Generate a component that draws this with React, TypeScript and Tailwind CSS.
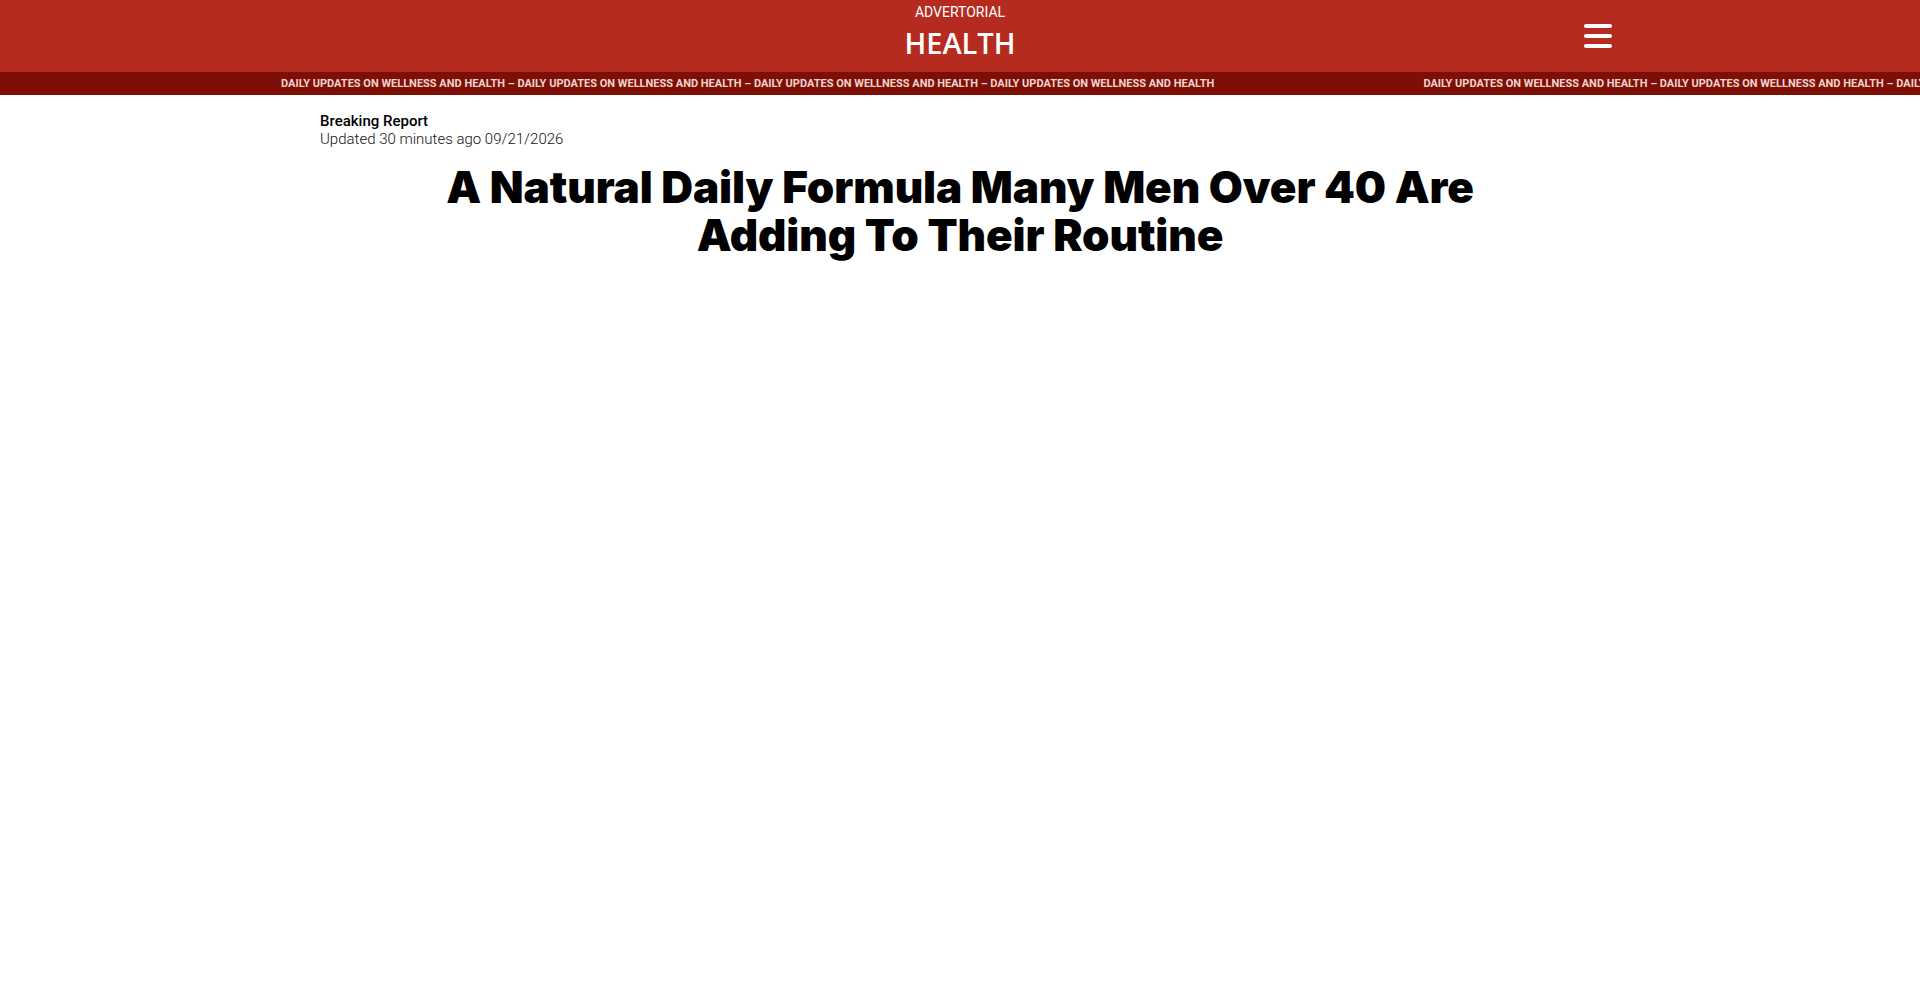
import React from "react";

const TICKER =
  "DAILY UPDATES ON WELLNESS AND HEALTH – DAILY UPDATES ON WELLNESS AND HEALTH – DAILY UPDATES ON WELLNESS AND HEALTH – DAILY UPDATES ON WELLNESS AND HEALTH";

export default function App() {
  return (
    <div className="min-h-[993px] bg-white" style={{ fontFamily: "Roboto, 'Liberation Sans', sans-serif" }}>
      <header className="bg-[#b52b20] h-[72px] relative">
        <div className="flex flex-col items-center pt-[3px]">
          <div className="text-[14px] leading-[18px] text-white uppercase">ADVERTORIAL</div>
          <div className="mt-[4px] text-[29px] leading-[36px] text-white font-semibold font-['Open_Sans',sans-serif]">HEALTH</div>
        </div>
        <button className="absolute left-[1584px] top-[24px] w-[28px] flex flex-col gap-[6px]" aria-label="menu">
          <span className="block h-[4px] w-[28px] rounded-full bg-white" />
          <span className="block h-[4px] w-[28px] rounded-full bg-white" />
          <span className="block h-[4px] w-[28px] rounded-full bg-white" />
        </button>
      </header>
      <div className="bg-[#7d0f06] h-[23px] pt-[1px] overflow-hidden flex items-center whitespace-nowrap pl-[281px] gap-[209px] text-[11px] font-bold text-[#f2d4cf]">
        <span className="shrink-0">{TICKER}</span>
        <span className="shrink-0">{TICKER}</span>
      </div>
      <main className="max-w-[1280px] mx-auto pt-[17px]">
        <div className="text-[15px] leading-[18px] font-medium text-black">Breaking Report</div>
        <div className="text-[15px] leading-[18px] font-light text-[#111]">Updated 30 minutes ago 09/21/2026</div>
        <h1 className="mt-[15px] text-center text-[44px] leading-[48px] font-black text-black tracking-[-0.1px] font-['Inter',sans-serif]">
          A Natural Daily Formula Many Men Over 40 Are
          <br />
          Adding To Their Routine
        </h1>
      </main>
    </div>
  );
}
